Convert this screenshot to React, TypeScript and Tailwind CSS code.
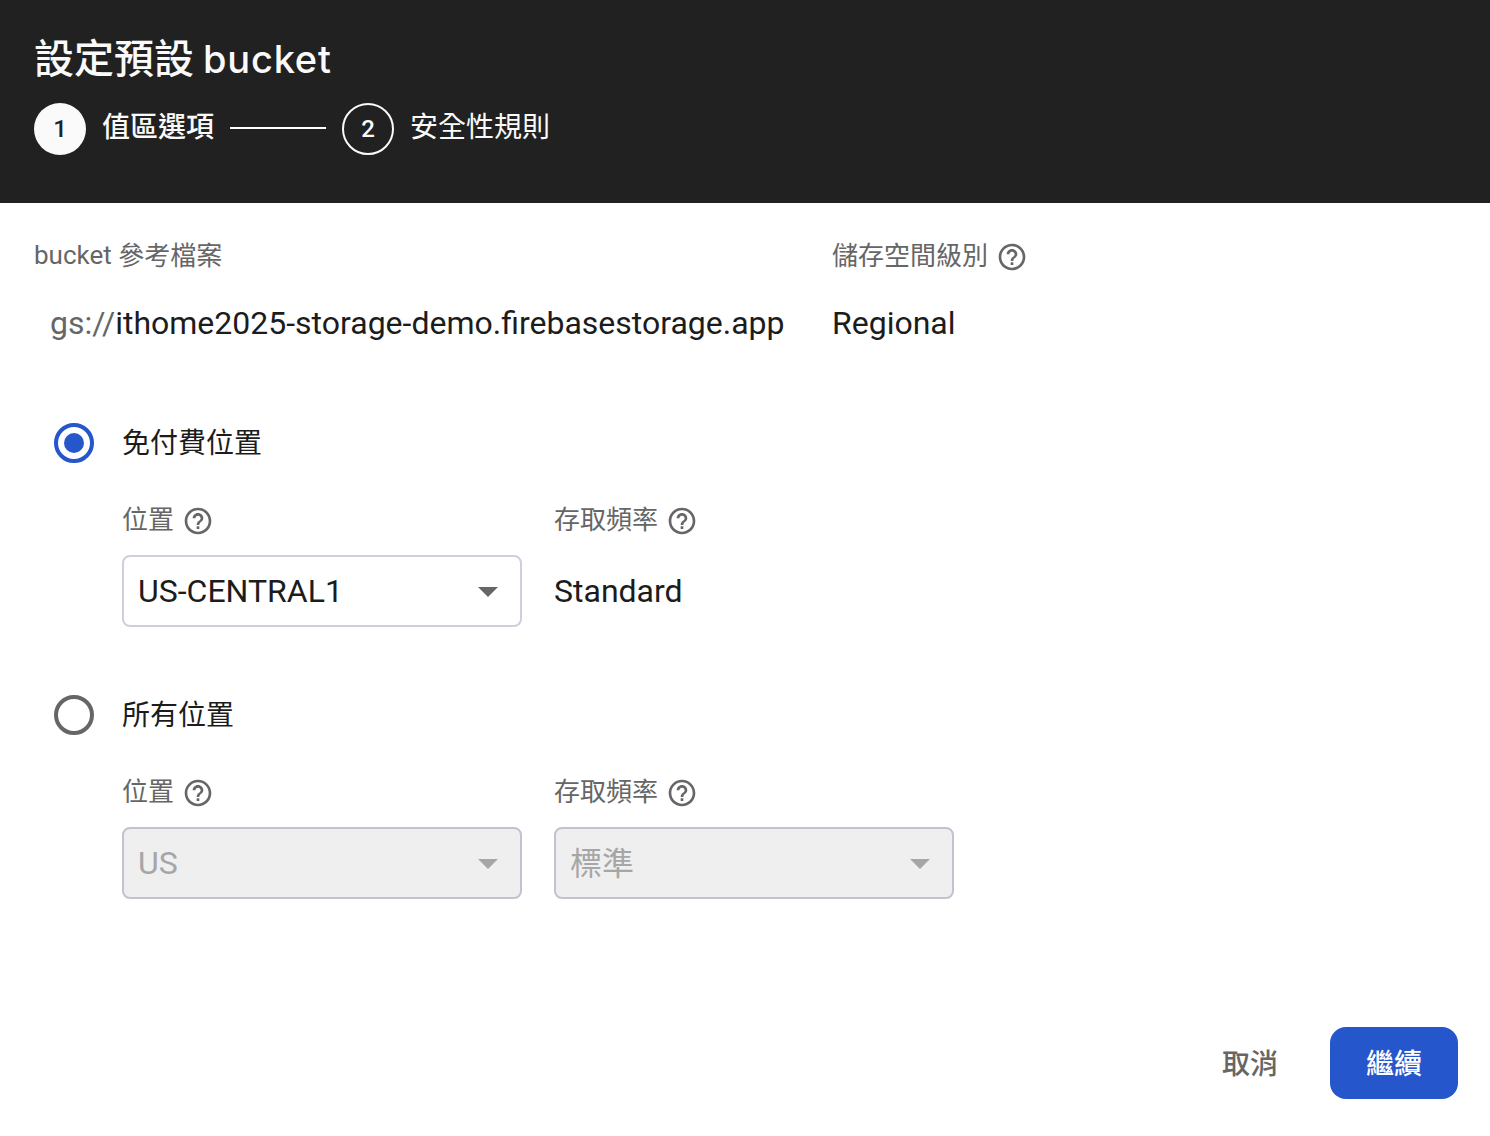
import type { ReactNode } from 'react';

const sans = "font-['Roboto','Noto_Sans_CJK_TC',sans-serif]";

function Help() {
  return (
    <svg viewBox="0 0 24 24" className="size-8 shrink-0" fill="currentColor">
      <path d="M11 18h2v-2h-2v2zm1-16C6.48 2 2 6.48 2 12s4.48 10 10 10 10-4.48 10-10S17.52 2 12 2zm0 18c-4.41 0-8-3.59-8-8s3.59-8 8-8 8 3.59 8 8-3.59 8-8 8zm0-14c-2.21 0-4 1.79-4 4h2c0-1.1.9-2 2-2s2 .9 2 2c0 2-3 1.75-3 5h2c0-2.25 3-2.5 3-5 0-2.21-1.79-4-4-4z" />
    </svg>
  );
}

function Label({ children, help = true }: { children: ReactNode; help?: boolean }) {
  return (
    <div className="flex h-8 items-center gap-2 text-[26px] leading-8 text-[#666]">
      <span className={help ? '-mt-0.5' : '-mt-1'}>{children}</span>
      {help && <Help />}
    </div>
  );
}

function Select({ value, disabled = false }: { value: ReactNode; disabled?: boolean }) {
  return (
    <div
      className={`flex h-[72px] w-[400px] items-center justify-between rounded-lg border-2 pr-[22px] pl-[14px] text-[32px] ${
        disabled ? 'border-[#c0c4d0] bg-[#efefef] text-[#a6a6a6]' : 'border-[#cdd0dc] bg-white text-[#1c1c1c]'
      }`}
    >
      <span className="leading-10">{value}</span>
      <svg viewBox="0 0 20 10" className={`mt-px h-[10px] w-5 ${disabled ? 'text-[#a6a6a6]' : 'text-[#666]'}`} fill="currentColor">
        <path d="M0 0h20L10 10z" />
      </svg>
    </div>
  );
}

function Radio({ checked = false }: { checked?: boolean }) {
  return (
    <span
      className={`flex size-10 shrink-0 items-center justify-center rounded-full border-4 ${
        checked ? 'border-[#2556cb]' : 'border-[#666]'
      }`}
    >
      {checked && <span className="size-5 rounded-full bg-[#2556cb]" />}
    </span>
  );
}

export default function App() {
  return (
    <div lang="zh-Hant" className={`flex h-[1136px] w-[1490px] flex-col overflow-hidden bg-white text-[#1c1c1c] ${sans}`}>
      <header className="h-[203px] bg-[#212121] pt-[34px] pl-[34px] text-[#fafafa]">
        <h1 className="flex h-12 items-baseline text-[40px] leading-[50px] font-medium whitespace-pre">
          <span>設定預設</span>
          <span className="ml-[9px] font-['Inter',sans-serif] text-[38px] tracking-[0.8px]">bucket</span>
        </h1>
        <div className="mt-[21px] flex h-[52px] items-center text-[28px]">
          <span className="flex size-[52px] items-center justify-center rounded-full bg-[#fafafa] text-2xl font-medium text-[#212121]">1</span>
          <span className="-mt-0.5 ml-4 font-medium">值區選項</span>
          <span className="mx-4 -mt-0.5 h-0.5 w-24 bg-white" />
          <span className="flex size-[52px] items-center justify-center rounded-full border-2 border-[#fafafa] text-2xl font-medium">2</span>
          <span className="-mt-0.5 ml-4">安全性規則</span>
        </div>
      </header>

      <main className="flex-1">
        <div className="mt-[38px] ml-[34px] grid grid-cols-[798px_1fr]">
          <Label help={false}>
            bucket <span className="inline-block translate-y-px">參考檔案</span>
          </Label>
          <Label>儲存空間級別</Label>
          <div className="mt-[30px] pl-4 text-[32px] leading-10 whitespace-nowrap">
            <span className="text-[#666]">gs://</span>ithome2025-storage-demo.firebasestorage.app
          </div>
          <div className="mt-[30px] text-[32px] leading-10">Regional</div>
        </div>

        <section className="mt-20 ml-[54px]">
          <div className="flex h-10 items-center gap-7 text-[28px]">
            <Radio checked />
            <span className="mt-0.5">免付費位置</span>
          </div>
          <div className="mt-[42px] ml-[68px] flex gap-8">
            <div className="flex flex-col gap-[18px]">
              <Label>位置</Label>
              <Select value="US-CENTRAL1" />
            </div>
            <div className="flex flex-col gap-[18px]">
              <Label>存取頻率</Label>
              <div className="flex h-[72px] items-center text-[32px]">Standard</div>
            </div>
          </div>
        </section>

        <section className="mt-[68px] ml-[54px]">
          <div className="flex h-10 items-center gap-7 text-[28px]">
            <Radio />
            <span className="mt-0.5">所有位置</span>
          </div>
          <div className="mt-[42px] ml-[68px] flex gap-8">
            <div className="flex flex-col gap-[18px]">
              <Label>位置</Label>
              <Select value="US" disabled />
            </div>
            <div className="flex flex-col gap-[18px]">
              <Label>存取頻率</Label>
              <Select value={<span className="inline-block translate-y-px">標準</span>} disabled />
            </div>
          </div>
        </section>
      </main>

      <footer className="mr-8 mb-[37px] flex h-[72px] shrink-0 justify-end text-[28px] font-medium">
        <button className="w-[128px] pt-1 text-[#666]">取消</button>
        <button className="ml-4 w-[128px] rounded-2xl bg-[#2556cb] pt-1 text-white">繼續</button>
      </footer>
    </div>
  );
}
